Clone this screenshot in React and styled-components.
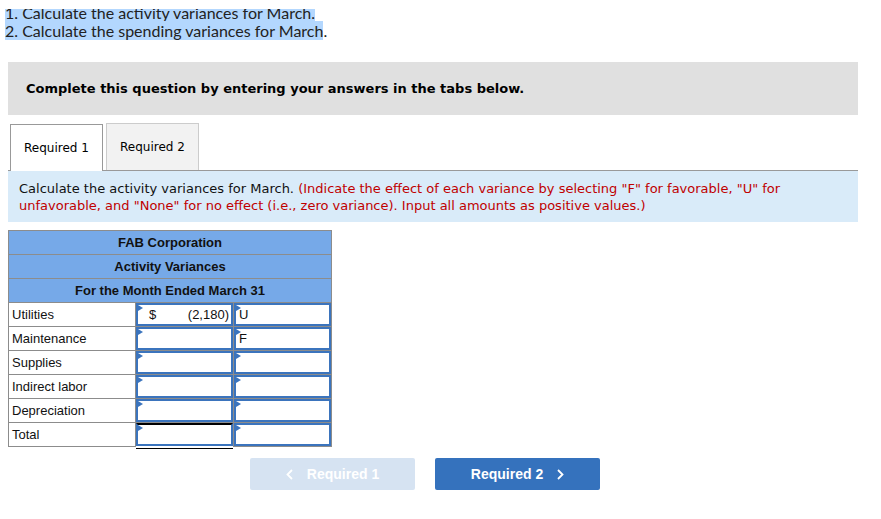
import React from "react";
import styled, { createGlobalStyle } from "styled-components";

const GlobalStyle = createGlobalStyle`
  body {
    margin: 0;
    background: #fff;
    font-family: "DejaVu Sans", Verdana, sans-serif;
  }
`;

const Page = styled.div`
  width: 881px;
  height: 519px;
  overflow: hidden;
  padding: 0 23px 0 8px;
  box-sizing: border-box;
`;

// the question text is scrolled so its first line is partly cut off
const IntroClip = styled.div`
  margin: 9px 0 0 -3px;
  height: 32px;
  overflow: hidden;
`;

const Intro = styled.div`
  margin-top: -5px;
  font-family: "Lato", "Open Sans", sans-serif;
  font-size: 16px;
  line-height: 18px;
  color: #222;
`;

const Hl = styled.span`
  background: #b3d7fe;
`;

const Banner = styled.div`
  margin-top: 21px;
  height: 53px;
  background: #e0e0e0;
  display: flex;
  align-items: center;
  padding-left: 18px;
  font-weight: bold;
  font-size: 13px;
  color: #000;
`;

const Tabs = styled.div`
  margin-top: 8px;
  display: flex;
  align-items: flex-end;
  gap: 3px;
  padding-left: 2px;
  border-bottom: 1px solid #999;
  height: 47px;
`;

const Tab = styled.div`
  width: 93px;
  height: 47px;
  box-sizing: border-box;
  border: 1px solid ${(p) => (p.$active ? "#999" : "#ccc")};
  border-bottom: none;
  background: ${(p) => (p.$active ? "#fff" : "#f2f2f2")};
  display: flex;
  align-items: center;
  justify-content: center;
  font-size: 12px;
  color: #000;
  position: relative;
  top: ${(p) => (p.$active ? "1px" : "0")};
`;

const Instructions = styled.div`
  background: #d9ebf9;
  height: 51px;
  box-sizing: border-box;
  padding: 10px 11px 0;
  font-size: 13px;
  line-height: 16.5px;
  color: #111;
`;

const Red = styled.span`
  color: #c00000;
`;

const Sheet = styled.table`
  margin-top: 8px;
  border-collapse: collapse;
  font-family: "Liberation Sans", Arial, sans-serif;
  font-size: 13px;
  color: #111;
`;

const HeadCell = styled.td`
  background: #76a9e8;
  border: 1px solid #8c8c8c;
  height: 23px;
  padding: 0;
  text-align: center;
  font-weight: bold;
`;

const LabelCell = styled.td`
  border: 1px solid #8c8c8c;
  width: 123px;
  height: 23px;
  padding: 0 0 0 3px;
  vertical-align: middle;
`;

const InputCell = styled.td`
  border: 1px solid #8c8c8c;
  width: 97px;
  height: 23px;
  padding: 0;
`;

const Input = styled.div`
  position: relative;
  box-sizing: border-box;
  height: 23px;
  border: 2px solid #3b74bd;
  ${(p) => (p.$totalTop ? "border-top: 2px solid #000;" : "")}
  ${(p) => (p.$total ? "box-shadow: 0 2px 0 #fff, 0 3px 0 #000;" : "")}
  display: flex;
  align-items: center;
  padding: 0 2px 0 11px;
  font-size: 13px;
  &::before {
    content: "";
    position: absolute;
    left: 0;
    top: 0;
    border-style: solid;
    border-width: 3px 0 3px 5px;
    border-color: transparent transparent transparent #3b74bd;
  }
`;

const Dollar = styled.span`
  flex: 1;
`;

const Effect = styled.span`
  margin-left: -8px;
`;

const Nav = styled.div`
  margin-top: 11px;
  padding-left: 242px;
  display: flex;
  gap: 20px;
`;

const NavButton = styled.div`
  width: 165px;
  height: 32px;
  border-radius: 2px;
  background: ${(p) => (p.$disabled ? "#d6e3f2" : "#3572bd")};
  color: #fff;
  display: flex;
  align-items: center;
  justify-content: center;
  gap: 14px;
  font-family: "Liberation Sans", Arial, sans-serif;
  font-weight: bold;
  font-size: 14px;
`;

const Chevron = ({ dir }) => (
  <svg width="7" height="11" viewBox="0 0 7 11">
    <path
      d={dir === "left" ? "M6 1 L1.5 5.5 L6 10" : "M1 1 L5.5 5.5 L1 10"}
      fill="none"
      stroke="#fff"
      strokeWidth="1.8"
    />
  </svg>
);

const rows = [
  { label: "Utilities", amount: "(2,180)", effect: "U" },
  { label: "Maintenance", effect: "F" },
  { label: "Supplies" },
  { label: "Indirect labor" },
  { label: "Depreciation" },
];

export default function App() {
  return (
    <Page>
      <GlobalStyle />
      <IntroClip>
        <Intro>
          <Hl>1. Calculate the activity variances for March. </Hl>
          <br />
          <Hl>2. Calculate the spending variances for March</Hl>.
        </Intro>
      </IntroClip>
      <Banner>Complete this question by entering your answers in the tabs below.</Banner>
      <Tabs>
        <Tab $active>Required 1</Tab>
        <Tab>Required 2</Tab>
      </Tabs>
      <Instructions>
        Calculate the activity variances for March.{" "}
        <Red>
          (Indicate the effect of each variance by selecting "F" for favorable, "U" for
          unfavorable, and "None" for no effect (i.e., zero variance). Input all amounts as
          positive values.)
        </Red>
      </Instructions>
      <Sheet>
        <tbody>
          <tr>
            <HeadCell colSpan={3}>FAB Corporation</HeadCell>
          </tr>
          <tr>
            <HeadCell colSpan={3}>Activity Variances</HeadCell>
          </tr>
          <tr>
            <HeadCell colSpan={3}>For the Month Ended March 31</HeadCell>
          </tr>
          {rows.map((r) => (
            <tr key={r.label}>
              <LabelCell>{r.label}</LabelCell>
              <InputCell>
                <Input>
                  {r.amount && (
                    <>
                      <Dollar>$</Dollar>
                      {r.amount}
                    </>
                  )}
                </Input>
              </InputCell>
              <InputCell>
                <Input>{r.effect && <Effect>{r.effect}</Effect>}</Input>
              </InputCell>
            </tr>
          ))}
          <tr>
            <LabelCell>Total</LabelCell>
            <InputCell>
              <Input $totalTop $total />
            </InputCell>
            <InputCell>
              <Input />
            </InputCell>
          </tr>
        </tbody>
      </Sheet>
      <Nav>
        <NavButton $disabled>
          <Chevron dir="left" />
          Required 1
        </NavButton>
        <NavButton>
          Required 2
          <Chevron dir="right" />
        </NavButton>
      </Nav>
    </Page>
  );
}
